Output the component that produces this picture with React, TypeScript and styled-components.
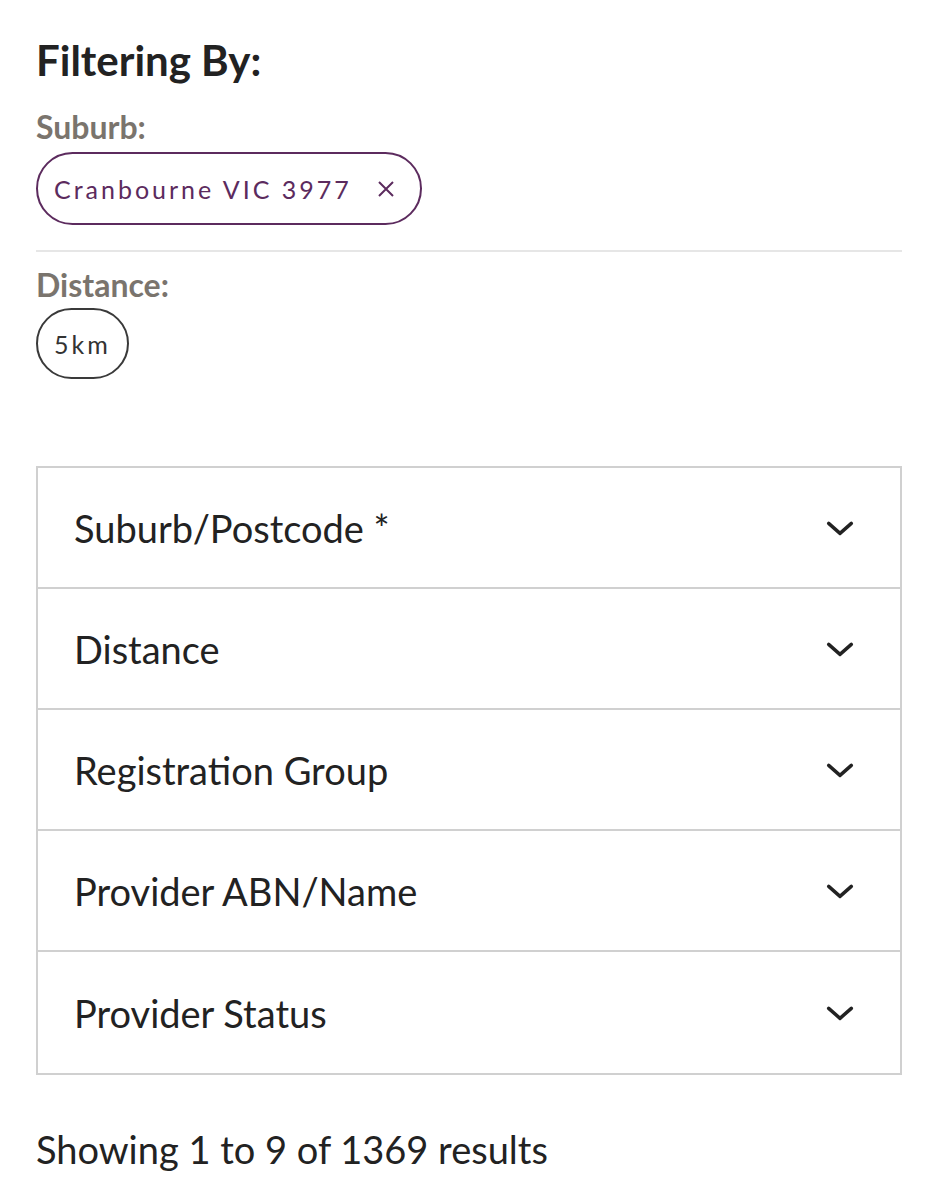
import React from "react";
import styled, { createGlobalStyle } from "styled-components";

const GlobalStyle = createGlobalStyle`
  html, body {
    margin: 0;
    padding: 0;
    background: #ffffff;
  }
  body {
    font-family: "Lato", "Noto Sans", sans-serif;
    color: #222222;
  }
`;

const Page = styled.div`
  width: 938px;
  box-sizing: border-box;
  padding: 34px 36px 40px 36px;
`;

const Heading = styled.h2`
  margin: 0;
  font-size: 42px;
  font-weight: 700;
  line-height: 52px;
  color: #222222;
`;

const FilterGroup = styled.div<{ $divider?: boolean }>`
  display: flex;
  flex-direction: column;
  align-items: flex-start;
  padding-bottom: 25px;
  margin-bottom: 14px;
  border-bottom: ${(p) => (p.$divider ? "2px solid #e6e6e6" : "none")};
`;

const Label = styled.div<{ $first?: boolean }>`
  font-size: 32px;
  font-weight: 700;
  line-height: 38px;
  color: #7a746d;
  margin-top: ${(p) => (p.$first ? "22px" : "0")};
  margin-bottom: ${(p) => (p.$first ? "6px" : "4px")};
`;

const Chip = styled.button<{ $tone: "purple" | "neutral" }>`
  display: inline-flex;
  align-items: center;
  gap: 24px;
  height: ${(p) => (p.$tone === "purple" ? "73px" : "71px")};
  box-sizing: border-box;
  padding: ${(p) => (p.$tone === "purple" ? "0 24px 0 16px" : "0 16px")};
  border-radius: 40px;
  border: 2px solid ${(p) => (p.$tone === "purple" ? "#5c2b5e" : "#3a3a3a")};
  background: #ffffff;
  color: ${(p) => (p.$tone === "purple" ? "#5c2b5e" : "#333333")};
  font-family: "Lato", "Noto Sans", sans-serif;
  font-size: 25px;
  letter-spacing: 3px;
  cursor: pointer;
`;

const Accordion = styled.div`
  margin-top: 62px;
  border: 2px solid #d0d0d0;
`;

const AccordionRow = styled.button`
  display: flex;
  align-items: center;
  justify-content: space-between;
  width: 100%;
  height: 121px;
  box-sizing: border-box;
  padding: 0 44px 0 36px;
  background: #ffffff;
  border: none;
  border-bottom: 2px solid #d0d0d0;
  font-family: "Lato", "Noto Sans", sans-serif;
  font-size: 38px;
  color: #222222;
  text-align: left;
  cursor: pointer;

  &:last-child {
    border-bottom: none;
  }
`;

const Results = styled.p`
  margin: 50px 0 0 0;
  font-size: 38px;
  line-height: 48px;
  color: #222222;
`;

const Chevron = () => (
  <svg width="32" height="32" viewBox="0 0 24 24" fill="none">
    <path
      d="M3.5 8.5l8.5 7.5 8.5-7.5"
      stroke="#222"
      strokeWidth="2.6"
      strokeLinecap="round"
      strokeLinejoin="round"
    />
  </svg>
);

const CloseIcon = () => (
  <svg width="20" height="20" viewBox="0 0 20 20" fill="none">
    <path d="M3 3l14 14M17 3L3 17" stroke="#5c2b5e" strokeWidth="2" />
  </svg>
);

const sections = [
  "Suburb/Postcode *",
  "Distance",
  "Registration Group",
  "Provider ABN/Name",
  "Provider Status",
];

export default function App() {
  return (
    <>
      <GlobalStyle />
      <Page>
        <Heading>Filtering By:</Heading>
        <FilterGroup $divider>
          <Label $first>Suburb:</Label>
          <Chip $tone="purple">
            Cranbourne VIC 3977
            <CloseIcon />
          </Chip>
        </FilterGroup>
        <FilterGroup>
          <Label>Distance:</Label>
          <Chip $tone="neutral">5km</Chip>
        </FilterGroup>

        <Accordion>
          {sections.map((s) => (
            <AccordionRow key={s}>
              {s}
              <Chevron />
            </AccordionRow>
          ))}
        </Accordion>

        <Results>Showing 1 to 9 of 1369 results</Results>
      </Page>
    </>
  );
}
